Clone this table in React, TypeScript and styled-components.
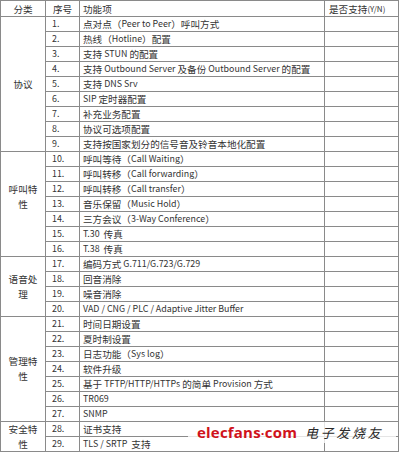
import React from "react";
import styled, { createGlobalStyle } from "styled-components";

const GlobalStyle = createGlobalStyle`
  html, body { margin: 0; padding: 0; background: #ffffff; }
  body {
    font-family: "Noto Sans CJK SC", "Noto Sans", sans-serif;
    color: #333333;
    text-spacing-trim: space-all;
  }
`;

const LINE = "#8a8a8a";

const Sheet = styled.div`
  position: relative;
  display: grid;
  grid-template-columns: 45px 34px 245px 74px;
  grid-template-rows: 16px repeat(29, 15px);
  width: 399px;
  box-sizing: border-box;
  border-top: 1px solid ${LINE};
  border-left: 1px solid ${LINE};
  font-size: 9.6px;
  line-height: 14px;
`;

const Cell = styled.div<{ $align?: "left" | "center"; $pad?: number }>`
  box-sizing: border-box;
  border-right: 1px solid ${LINE};
  border-bottom: 1px solid ${LINE};
  display: flex;
  align-items: center;
  justify-content: ${(p) => (p.$align === "center" ? "center" : "flex-start")};
  padding-left: ${(p) => p.$pad ?? 0}px;
  white-space: pre;
  overflow: hidden;
`;

const HeadCell = styled(Cell)`
  padding-top: 1px;
`;

const Latin = styled.span`
  font-size: 8.9px;
`;

const Small = styled.span`
  font-size: 8px;
`;

const Category = styled.div<{ $span: number; $lift?: boolean }>`
  grid-row: span ${(p) => p.$span};
  box-sizing: border-box;
  border-right: 1px solid ${LINE};
  border-bottom: 1px solid ${LINE};
  display: flex;
  align-items: center;
  justify-content: center;
  text-align: center;
  padding: 0 6px ${(p) => (p.$lift ? 15 : 0)}px;
  line-height: 15px;
`;

const Watermark = styled.div`
  position: absolute;
  left: 187px;
  top: 421px;
  width: 208px;
  height: 21px;
  display: flex;
  align-items: center;
  gap: 8px;
  padding-left: 9px;
  box-sizing: border-box;
  background: rgba(255, 255, 255, 0.78);
`;

const Logo = styled.span`
  font-family: "Open Sans", "Noto Sans", sans-serif;
  font-weight: 700;
  font-size: 15px;
  letter-spacing: 0.2px;
  color: #d0121b;
  line-height: 1;
`;

const LogoDot = styled.span`
  font-size: 13px;
`;

const Brand = styled.span`
  font-family: "Noto Sans CJK SC", sans-serif;
  font-size: 13px;
  font-style: italic;
  letter-spacing: 2.6px;
  color: #2a2a2a;
  line-height: 1;
`;

type Group = { name: string; lift?: boolean; items: string[] };

const groups: Group[] = [
  {
    name: "协议",
    items: [
      "点对点（Peer to Peer）呼叫方式",
      "热线（Hotline）配置",
      "支持 STUN 的配置",
      "支持 Outbound Server 及备份 Outbound Server 的配置",
      "支持 DNS Srv",
      "SIP 定时器配置",
      "补充业务配置",
      "协议可选项配置",
      "支持按国家划分的信号音及铃音本地化配置",
    ],
  },
  {
    name: "呼叫特性",
    lift: true,
    items: [
      "呼叫等待（Call Waiting）",
      "呼叫转移（Call forwarding）",
      "呼叫转移（Call transfer）",
      "音乐保留（Music Hold）",
      "三方会议（3-Way Conference）",
      "T.30  传真",
      "T.38  传真",
    ],
  },
  {
    name: "语音处理",
    items: [
      "编码方式 G.711/G.723/G.729",
      "回音消除",
      "噪音消除",
      "VAD / CNG / PLC / Adaptive Jitter Buffer",
    ],
  },
  {
    name: "管理特性",
    items: [
      "时间日期设置",
      "夏时制设置",
      "日志功能（Sys log）",
      "软件升级",
      "基于 TFTP/HTTP/HTTPs 的简单 Provision 方式",
      "TR069",
      "SNMP",
    ],
  },
  {
    name: "安全特性",
    items: ["证书支持", "TLS / SRTP  支持"],
  },
];

// Split text into runs: ASCII runs get the narrower Latin face size.
function Mixed({ text }: { text: string }) {
  const parts = text.split(/([\x20-\x7e]+)/).filter((s) => s.length > 0);
  return (
    <>
      {parts.map((p, i) =>
        /^[\x20-\x7e]+$/.test(p) ? <Latin key={i}>{p}</Latin> : <React.Fragment key={i}>{p}</React.Fragment>
      )}
    </>
  );
}

export default function App() {
  let n = 0;
  return (
    <>
      <GlobalStyle />
      <Sheet>
        <HeadCell $align="center">分类</HeadCell>
        <HeadCell $align="center">序号</HeadCell>
        <HeadCell $pad={3}>功能项</HeadCell>
        <HeadCell $pad={4}>
          是否支持<Small>(Y/N)</Small>
        </HeadCell>
        {groups.map((g) =>
          g.items.map((item, i) => {
            n += 1;
            return (
              <React.Fragment key={n}>
                {i === 0 && (
                  <Category $span={g.items.length} $lift={g.lift}>
                    {g.name}
                  </Category>
                )}
                <Cell $pad={6}>
                  <Latin>{n}.</Latin>
                </Cell>
                <Cell $pad={3}>
                  <Mixed text={item} />
                </Cell>
                <Cell />
              </React.Fragment>
            );
          })
        )}
        <Watermark>
          <Logo>
            elecfans<LogoDot>·</LogoDot>com
          </Logo>
          <Brand>电子发烧友</Brand>
        </Watermark>
      </Sheet>
    </>
  );
}
